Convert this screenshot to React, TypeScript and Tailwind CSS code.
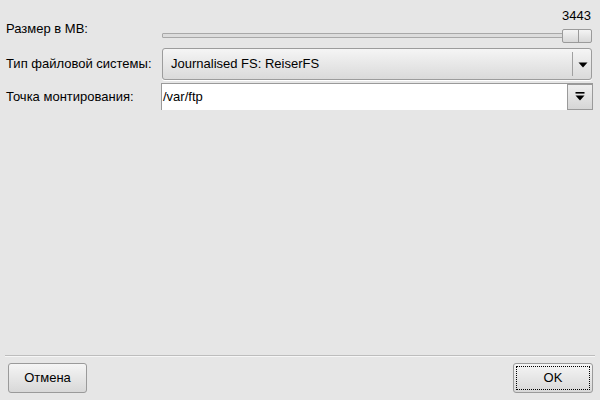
import React from "react";

const font = { fontFamily: '"Liberation Sans", Arial, sans-serif' };

function Arrow({ bar }: { bar?: boolean }) {
  return (
    <svg width="10" height="11" viewBox="0 0 10 11">
      {bar && <rect x="0.5" y="0" width="9" height="1.6" fill="#000" />}
      <polygon points="0.5,3.5 9.5,3.5 5,8.5" fill="#000" />
    </svg>
  );
}

export default function App() {
  return (
    <div
      className="w-[600px] h-[400px] bg-[#e6e6e6] flex flex-col text-[13px] text-black overflow-hidden"
      style={font}
    >
      {/* Row 1: size slider */}
      <div className="flex h-[46px]">
        <div className="w-[162px] pl-[6px] pt-[21px] leading-[16px]">Размер в MB:</div>
        <div className="w-[430px] flex flex-col">
          <div className="h-[29px] pt-[8px] text-right pr-[1px] leading-[16px]">3443</div>
          <div className="relative h-[14px]">
            <div className="absolute left-0 right-0 top-[4px] h-[5px] border border-[#a8a8a8] bg-[#dcdcdc] rounded-[1px]" />
            <div className="absolute right-0 top-0 w-[30px] h-[14px] border border-[#9a9a9a] rounded-[2px] bg-gradient-to-b from-[#f4f4f4] to-[#d8d8d8] flex justify-center">
              <div className="w-px h-full bg-[#9a9a9a] ml-[2px]" />
            </div>
          </div>
        </div>
      </div>

      {/* Row 2: file system combo */}
      <div className="flex mt-[2px] h-[32px]">
        <div className="w-[162px] pl-[6px] flex items-center">Тип файловой системы:</div>
        <div className="w-[430px] h-[32px] border border-[#9c9c9c] rounded-[3px] bg-gradient-to-b from-[#f5f5f5] to-[#dadada] flex items-center shadow-[0_1px_0_#ffffff]">
          <span className="flex-1 pl-[8px]">Journalised FS: ReiserFS</span>
          <div className="w-px h-[24px] bg-[#a0a0a0]" />
          <div className="w-[18px] flex justify-center pl-[1px] pt-[1px]">
            <Arrow />
          </div>
        </div>
      </div>

      {/* Row 3: mount point */}
      <div className="flex mt-[3px] h-[27px]">
        <div className="w-[161px] pl-[6px] flex items-center">Точка монтирования:</div>
        <div className="w-[432px] h-[27px] flex bg-white border-t border-l border-[#9a9a9a]">
          <div className="flex-1 flex items-center pl-[1px]">/var/ftp</div>
          <div className="w-[26px] h-full border border-[#9a9a9a] bg-gradient-to-b from-[#efefef] to-[#d6d6d6] flex items-center justify-center">
            <Arrow bar />
          </div>
        </div>
      </div>

      <div className="flex-1" />

      {/* separator */}
      <div className="mx-[5px] h-px bg-[#bdbdbd]" />
      <div className="mx-[5px] h-px bg-[#f6f6f6]" />

      {/* buttons */}
      <div className="flex justify-between pl-[8px] pr-[7px] pt-[6px] pb-[7px]">
        <button className="w-[79px] h-[30px] border border-[#9a9a9a] rounded-[3px] bg-gradient-to-b from-[#f5f5f5] to-[#d8d8d8] text-[13px]" style={font}>
          Отмена
        </button>
        <button className="w-[80px] h-[30px] border border-[#9a9a9a] rounded-[3px] bg-gradient-to-b from-[#f5f5f5] to-[#d8d8d8] p-[2px] text-[13px]" style={font}>
          <div className="w-full h-full border border-dotted border-black flex items-center justify-center">
            OK
          </div>
        </button>
      </div>
    </div>
  );
}
